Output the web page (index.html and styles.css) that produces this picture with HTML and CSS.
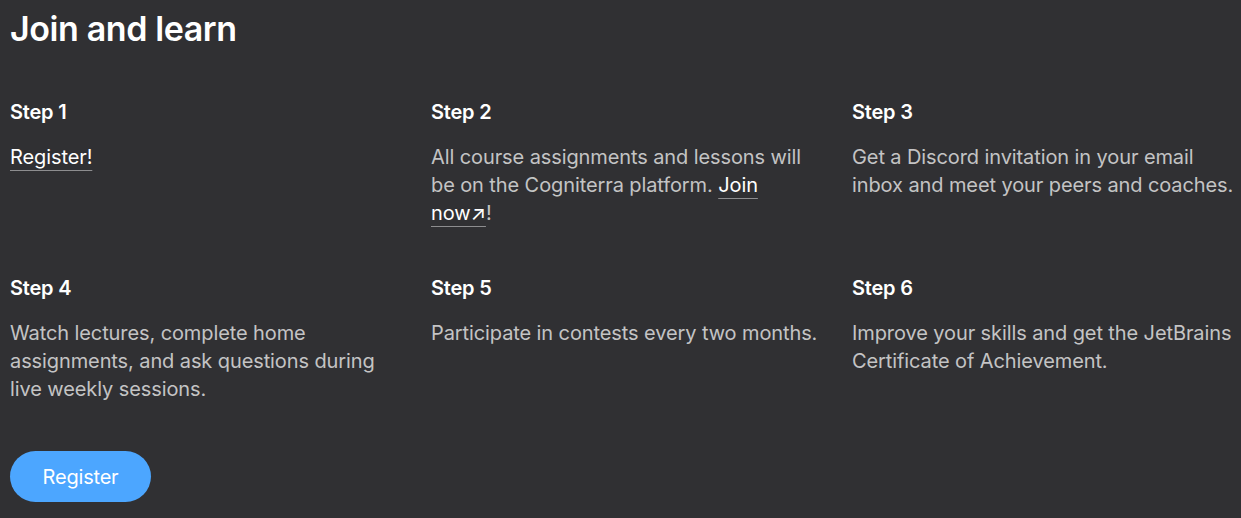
FILE: index.html
```html
<!DOCTYPE html>
<html lang="en">
<head>
<meta charset="utf-8">
<link rel="stylesheet" href="styles.css">
</head>
<body>
<section class="page">
  <h1 class="title">Join and learn</h1>
  <div class="steps">
    <div class="step">
      <h3 class="step-title">Step 1</h3>
      <p class="step-text"><a class="link" href="#">Register!</a></p>
    </div>
    <div class="step">
      <h3 class="step-title">Step 2</h3>
      <p class="step-text">All course assignments and lessons will be on the Cogniterra platform. <a class="link" href="#">Join</a> <span class="nowrap"><a class="link" href="#">now↗</a>!</span></p>
    </div>
    <div class="step">
      <h3 class="step-title">Step 3</h3>
      <p class="step-text">Get a Discord invitation in your email inbox and meet your peers and coaches.</p>
    </div>
    <div class="step">
      <h3 class="step-title">Step 4</h3>
      <p class="step-text">Watch lectures, complete home assignments, and ask questions during live weekly sessions.</p>
    </div>
    <div class="step">
      <h3 class="step-title">Step 5</h3>
      <p class="step-text">Participate in contests every two months.</p>
    </div>
    <div class="step">
      <h3 class="step-title">Step 6</h3>
      <p class="step-text">Improve your skills and get the JetBrains Certificate of Achievement.</p>
    </div>
  </div>
  <a class="button" href="#">Register</a>
</section>
</body>
</html>
```

FILE: styles.css
```css
html, body {
  margin: 0;
  padding: 0;
  background: #303033;
}
body {
  font-family: Inter, "Noto Sans", sans-serif;
  color: #ffffff;
  width: 1241px;
  height: 518px;
  overflow: hidden;
}
.page {
  padding: 9px 0 0 10px;
}
.title {
  margin: 0;
  font-size: 34px;
  line-height: 40px;
  font-weight: 600;
  letter-spacing: -0.4px;
}
.steps {
  margin-top: 49px;
  display: grid;
  grid-template-columns: repeat(3, 389px);
  column-gap: 32px;
  row-gap: 47px;
}
.step-title {
  margin: 0;
  font-size: 20px;
  line-height: 28px;
  font-weight: 600;
  letter-spacing: -0.2px;
}
.step-text {
  margin: 17px 0 0;
  font-size: 20px;
  line-height: 28px;
  font-weight: 400;
  letter-spacing: -0.1px;
  color: rgba(255, 255, 255, 0.72);
}
.nowrap {
  white-space: nowrap;
}
.link {
  color: #ffffff;
  text-decoration: underline;
  text-decoration-color: rgba(255, 255, 255, 0.45);
  text-decoration-thickness: 1px;
  text-underline-offset: 6px;
}
.button {
  display: inline-flex;
  align-items: center;
  justify-content: center;
  margin-top: 48px;
  width: 141px;
  height: 51px;
  border-radius: 26px;
  background: #4ca6ff;
  color: #ffffff;
  text-decoration: none;
  font-size: 20px;
  font-weight: 400;
  letter-spacing: -0.2px;
}
```
